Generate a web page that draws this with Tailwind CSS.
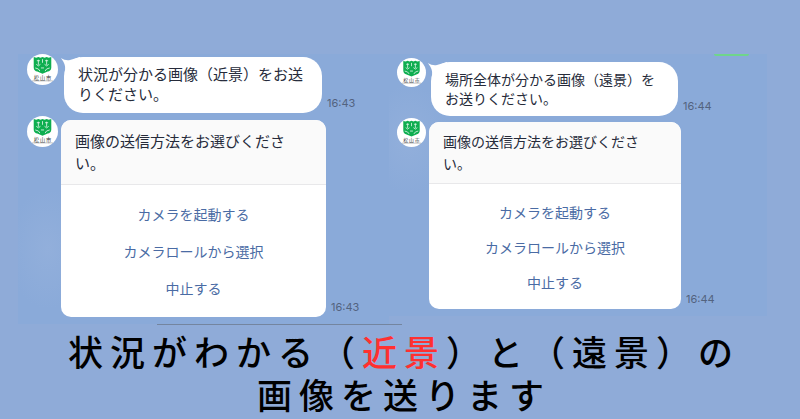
<!DOCTYPE html>
<html lang="ja">
<head>
  <meta charset="UTF-8" />
  <meta name="viewport" content="width=device-width, initial-scale=1.0" />
  <title>画像の送信方法</title>
  <script src="https://cdn.jsdelivr.net/npm/@tailwindcss/browser@4"></script>
</head>
<body class="min-h-screen overflow-x-hidden bg-[#8fabd8] font-['Inter','Noto_Sans_CJK_JP',sans-serif] text-[#262b3a]">
  <!-- Avatar artwork, shared by every message -->
  <svg class="hidden" aria-hidden="true">
    <symbol id="avatar" viewBox="0 0 30 30">
      <circle cx="15" cy="15" r="15" fill="#fff"/>
      <path fill="#0fae50" d="M6.500 3l2.500.7 2-.9 2 .9 2-.9 2 .9 2-.9 2 .9 2.500-.7v10c0 2.500-1.500 3.500-3.500 4L15 19.200l-5-2.200c-2-.5-3.500-1.500-3.500-4z"/>
      <path fill="none" stroke="#e4f7eb" stroke-width=".8" d="M11 5.500v5M9.500 6.500h3M9 10l2 1.500L13 10M19 5.500v5M17.500 6.500h3M17 10l2 1.500 2-1.500M15 5v3.500M8 13.500l3 1 1.500 2M22 13.500l-3 1-1.500 2M13.500 13.500h3"/>
      <text x="15.500" y="25" text-anchor="middle" font-size="5" letter-spacing="1" fill="#333" font-family="Noto Sans CJK JP, sans-serif">松山市</text>
      <path stroke="#999" stroke-width=".6" d="M5 26h20"/>
    </symbol>
    <symbol id="tail" viewBox="0 0 20 14">
      <path fill="#fff" d="M0 1c3 2 6 2.500 9 2l10-3v6L4 13C5 8 2 4 0 1z"/>
    </symbol>
  </svg>

  <main class="pt-[54px]">
    <div class="grid grid-cols-[371fr_378fr] items-start pr-[33px] pl-[18px]">
      <!-- Close-up photo -->
      <section class="h-full bg-[#8aaad9] bg-[radial-gradient(ellipse_40px_60px_at_30px_195px,#92afdb,transparent)] pb-[7px] pl-[9px]">
        <div class="flex items-start gap-[6px]">
          <svg class="size-[31px] shrink-0" role="img" aria-label="松山市"><use href="#avatar"/></svg>
          <div class="mt-[3px] flex items-end gap-[5px]">
            <div class="relative w-[258px] rounded-[19px] bg-white px-[14px] py-2">
              <svg class="absolute top-0 -left-[3px] h-[14px] w-5" aria-hidden="true"><use href="#tail"/></svg>
              <p class="text-[15px] leading-5">状況が分かる画像（近景）をお送りください。</p>
            </div>
            <time class="pb-1 text-[11px] leading-3 text-[#53637f]">16:43</time>
          </div>
        </div>
        <div class="mt-[3px] flex items-start gap-[3px]">
          <svg class="size-[31px] shrink-0" role="img" aria-label="松山市"><use href="#avatar"/></svg>
          <div class="mt-1 flex items-end gap-[5px]">
            <div class="w-[265px] overflow-hidden rounded-[10px] bg-white">
              <p class="border-b border-[#e8e8ea] bg-[#fafafa] px-[14px] pt-[11px] pb-[9px] text-[15px] leading-[22px]">画像の送信方法をお選びください。</p>
              <div class="flex flex-col items-center pt-[11px] pb-[10px] text-sm text-[#4a6ba4]">
                <button type="button" class="h-[37px] w-full">カメラを起動する</button>
                <button type="button" class="h-[37px] w-full">カメラロールから選択</button>
                <button type="button" class="h-[37px] w-full">中止する</button>
              </div>
            </div>
            <time class="pb-1 text-[11px] leading-3 text-[#53637f]">16:43</time>
          </div>
        </div>
      </section>

      <!-- Wide photo -->
      <section class="relative bg-[#8aaad9] bg-[radial-gradient(ellipse_40px_55px_at_20px_85px,#92afdb,transparent)] pt-1 pb-[7px] pl-2">
        <div class="absolute top-0 right-[18px] h-[2px] w-[35px] rounded-b-full bg-[#6fd58b]"></div>
        <div class="flex items-start gap-[5px]">
          <svg class="size-[29px] shrink-0" role="img" aria-label="松山市"><use href="#avatar"/></svg>
          <div class="mt-1 flex items-end gap-[5px]">
            <div class="relative w-[247px] rounded-[19px] bg-white px-[14px] py-2">
              <svg class="absolute top-0 -left-[3px] h-[14px] w-5" aria-hidden="true"><use href="#tail"/></svg>
              <p class="text-sm leading-[19px]">場所全体が分かる画像（遠景）をお送りください。</p>
            </div>
            <time class="pb-1 text-[11px] leading-3 text-[#53637f]">16:44</time>
          </div>
        </div>
        <div class="mt-[2px] flex items-start gap-[3px]">
          <svg class="size-[29px] shrink-0" role="img" aria-label="松山市"><use href="#avatar"/></svg>
          <div class="mt-1 flex items-end gap-[5px]">
            <div class="w-[252px] overflow-hidden rounded-[10px] bg-white">
              <p class="border-b border-[#e8e8ea] bg-[#fafafa] pt-[9px] pr-8 pb-2 pl-[14px] text-sm leading-[22px]">画像の送信方法をお選びください。</p>
              <div class="flex flex-col items-center pt-[11px] pb-[9px] text-sm text-[#4a6ba4]">
                <button type="button" class="h-[35px] w-full">カメラを起動する</button>
                <button type="button" class="h-[35px] w-full">カメラロールから選択</button>
                <button type="button" class="h-[35px] w-full">中止する</button>
              </div>
            </div>
            <time class="pb-1 text-[11px] leading-3 text-[#53637f]">16:44</time>
          </div>
        </div>
      </section>
    </div>

    <!-- Caption -->
    <div class="ml-[157px] h-px w-[245px] bg-[#74859f]"></div>
    <h1 class="pt-1 pl-2 text-center font-['Noto_Sans_CJK_JP',sans-serif] text-[35px] leading-[43px] font-medium tracking-[7px] text-black">状況がわかる（<span class="text-[#ff3030]">近景</span>）と（遠景）の<br>画像を送ります</h1>
  </main>
</body>
</html>
